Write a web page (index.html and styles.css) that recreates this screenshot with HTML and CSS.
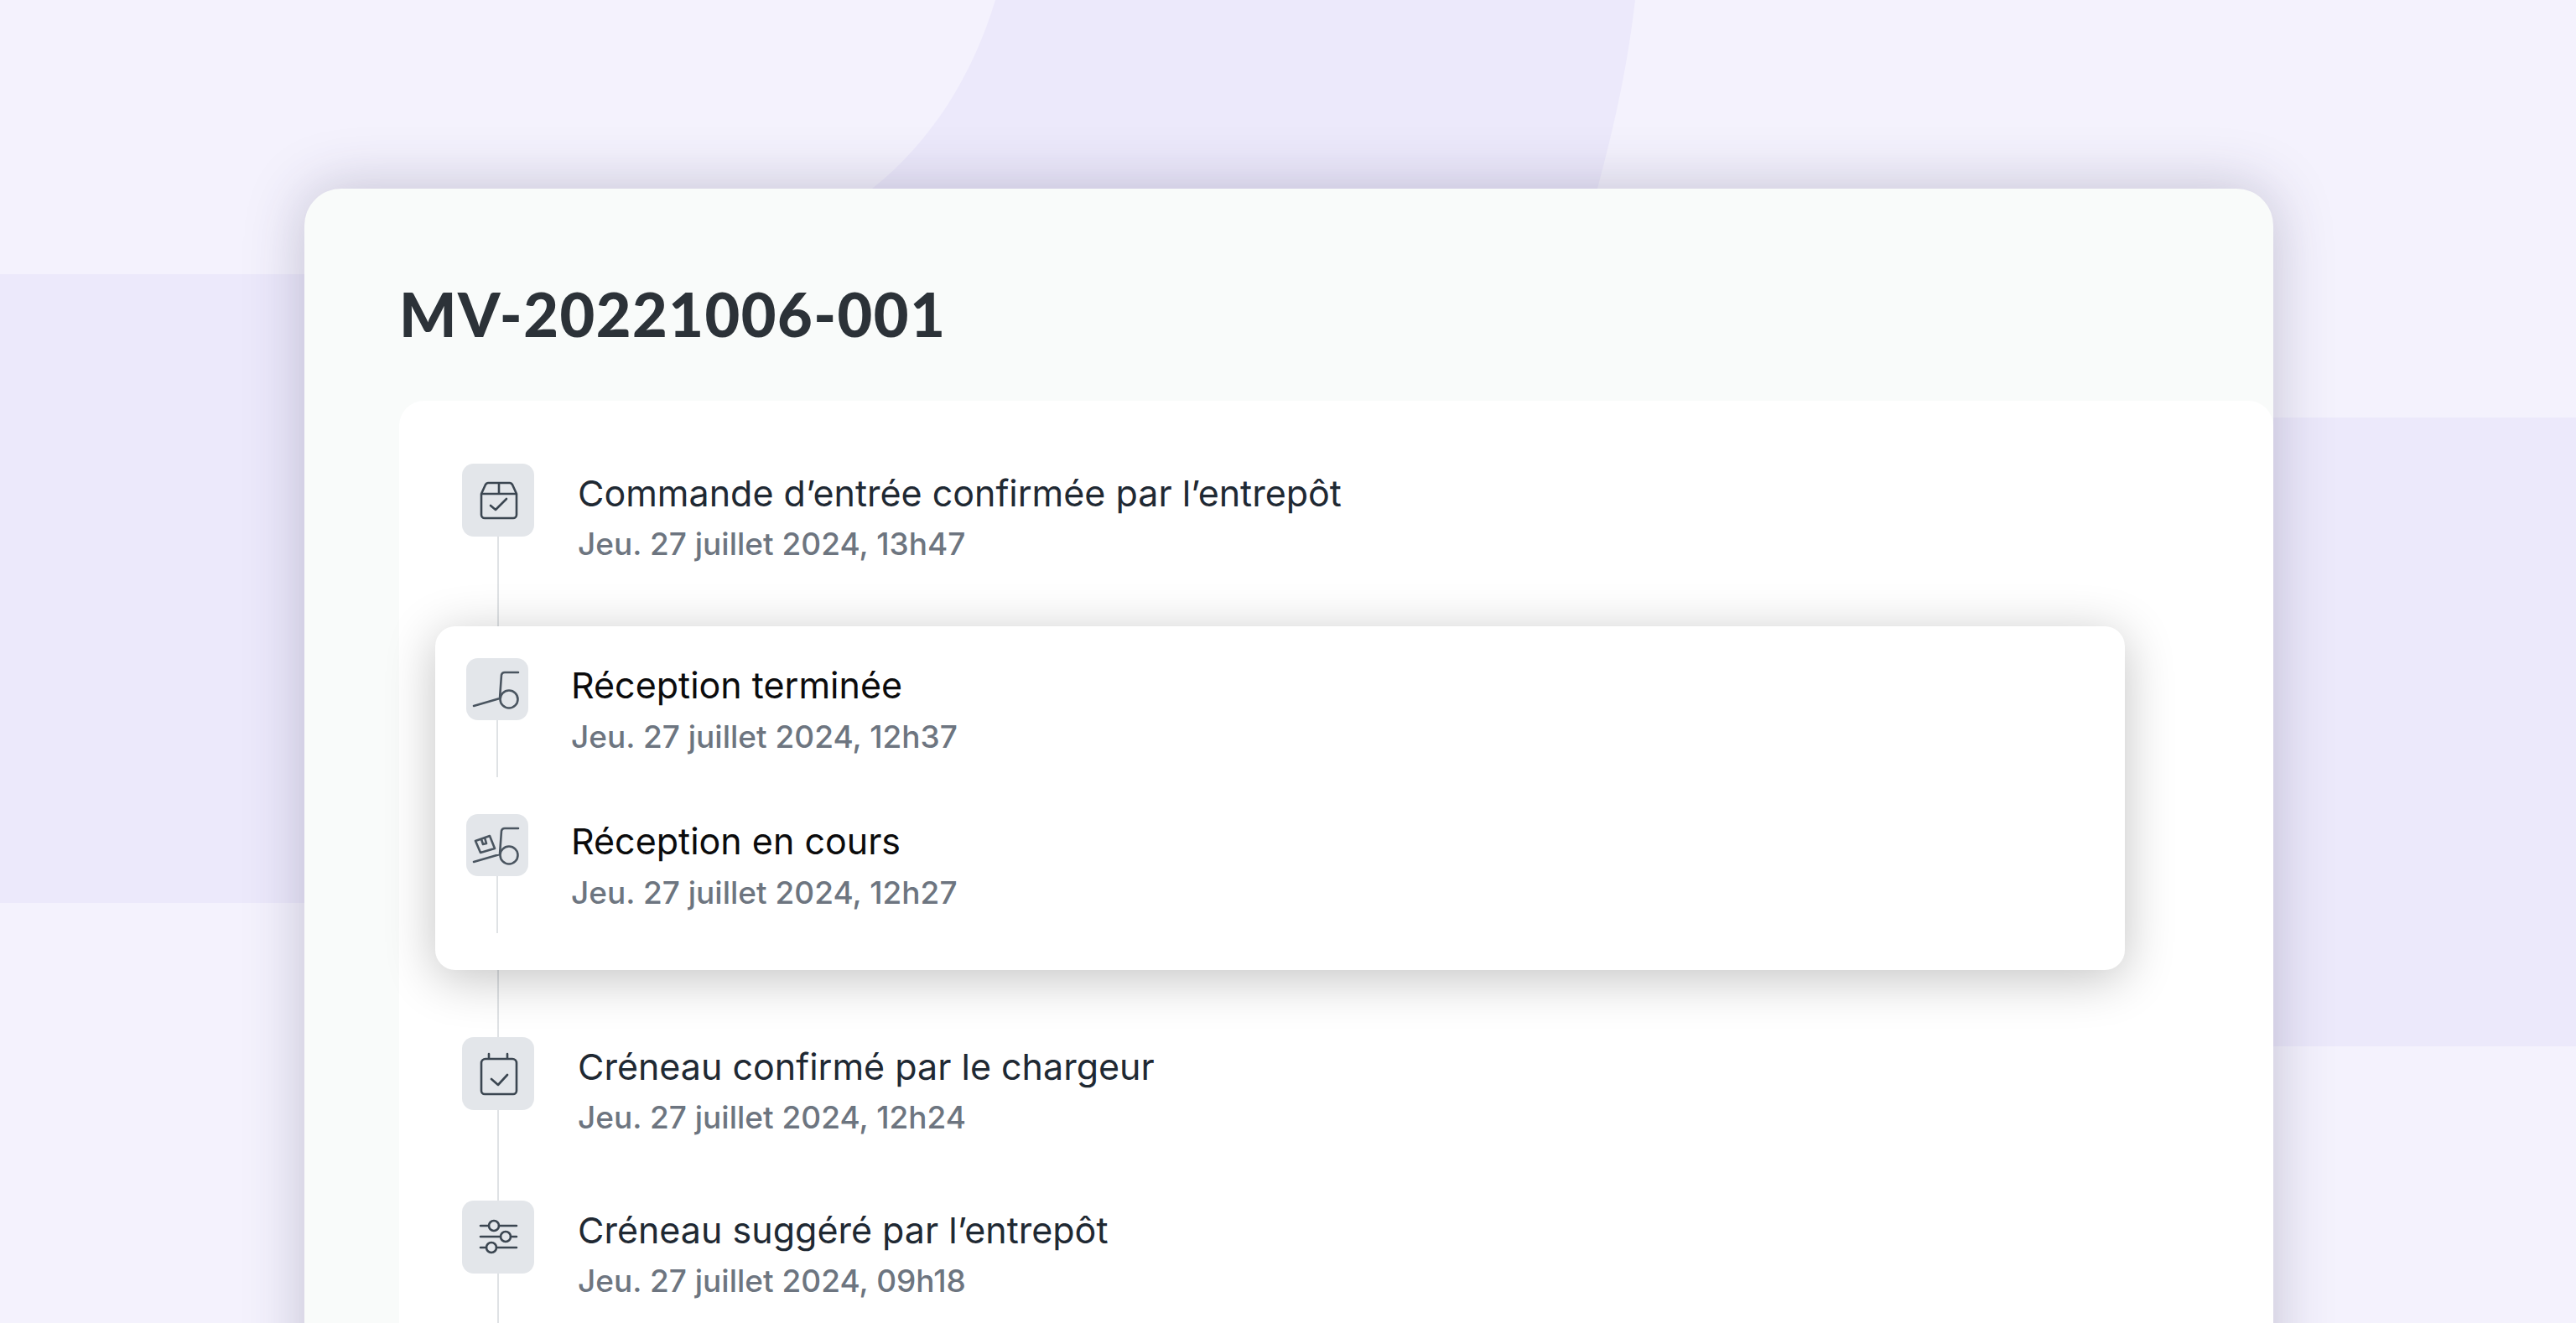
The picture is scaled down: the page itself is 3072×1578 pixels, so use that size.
FILE: index.html
```html
<!DOCTYPE html>
<html lang="fr">
<head>
<meta charset="utf-8">
<title>MV-20221006-001</title>
<link rel="stylesheet" href="styles.css">
</head>
<body>
<svg class="backdrop" viewBox="0 0 3072 1578" aria-hidden="true">
  <rect class="shade" x="0" y="327" width="400" height="750"/>
  <rect class="shade" x="2680" y="498" width="392" height="750"/>
  <path class="shade" d="M1187 0 C1160 90 1110 170 1040 225 L1040 300 L1890 300 L1905 225 C1928 140 1942 70 1950 0 Z"/>
</svg>
<main class="card">
  <h1 class="ref">MV-20221006-001</h1>
  <section class="panel">
    <div class="timeline">
      <article class="step step-tall">
        <div class="rail">
          <div class="badge">
            <svg class="ico" viewBox="0 0 86 86"><path d="M23 36v25a4 4 0 0 0 4 4h34a4 4 0 0 0 4-4V36l-5-11a4 4 0 0 0-3-2H31a4 4 0 0 0-3 2zM23 36h42M44 23v13M34 50l6 5 13-13"/></svg>
          </div>
          <div class="wire"></div>
        </div>
        <div class="copy">
          <p class="what">Commande d’entrée confirmée par l’entrepôt</p>
          <p class="when">Jeu. 27 juillet 2024, 13h47</p>
        </div>
      </article>
      <article class="step">
        <div class="rail">
          <div class="badge">
            <svg class="ico" viewBox="0 0 86 86"><path d="M23 31a5 5 0 0 1 5-5h32a5 5 0 0 1 5 5v33a4 4 0 0 1-4 4H27a4 4 0 0 1-4-4zM32 20v6M54 20v6M35 50l8 7 11-12"/></svg>
          </div>
          <div class="wire"></div>
        </div>
        <div class="copy">
          <p class="what">Créneau confirmé par le chargeur</p>
          <p class="when">Jeu. 27 juillet 2024, 12h24</p>
        </div>
      </article>
      <article class="step">
        <div class="rail">
          <div class="badge">
            <svg class="ico" viewBox="0 0 86 86"><path d="M22 30h10M44 30h21M22 43h24M58 43h7M22 56h7M41 56h24"/><circle cx="38" cy="30" r="6"/><circle cx="52" cy="43" r="6"/><circle cx="35" cy="56" r="6"/></svg>
          </div>
          <div class="wire"></div>
        </div>
        <div class="copy">
          <p class="what">Créneau suggéré par l’entrepôt</p>
          <p class="when">Jeu. 27 juillet 2024, 09h18</p>
        </div>
      </article>
    </div>
    <aside class="popout">
      <article class="pop-step">
        <div class="rail rail-small">
          <div class="badge badge-small">
            <svg class="ico-small" viewBox="0 0 74 74"><path d="M62 17H46a4 4 0 0 0-4 3l-2 28L9 57"/><circle cx="51" cy="49" r="10.5"/></svg>
          </div>
          <div class="wire"></div>
        </div>
        <div class="copy copy-small">
          <p class="what what-strong">Réception terminée</p>
          <p class="when">Jeu. 27 juillet 2024, 12h37</p>
        </div>
      </article>
      <article class="pop-step">
        <div class="rail rail-small">
          <div class="badge badge-small">
            <svg class="ico-small" viewBox="0 0 74 74"><path d="M62 17H46a4 4 0 0 0-4 3l-2 28L9 57"/><circle cx="51" cy="49" r="10.5"/><path d="M11 32l17-6 6 15-17 5zM18 30l2 6 4-1-2-7"/></svg>
          </div>
          <div class="wire"></div>
        </div>
        <div class="copy copy-small">
          <p class="what what-strong">Réception en cours</p>
          <p class="when">Jeu. 27 juillet 2024, 12h27</p>
        </div>
      </article>
    </aside>
  </section>
</main>
</body>
</html>
```
FILE: styles.css
```css
* { box-sizing: border-box; }
html, body { margin: 0; height: 1578px; overflow: hidden; }
body {
  background: #f4f2fd;
  font-family: "Inter", "Liberation Sans", sans-serif;
  padding: 225px 361px 0 363px;
}
p { margin: 0; }
.backdrop { position: absolute; inset: 0; width: 3072px; height: 1578px; }
.shade { fill: #ece9fb; }
.card {
  position: relative;
  height: 1500px;
  background: #f9fbfa;
  border-radius: 44px;
  box-shadow: 0 0 70px rgba(50, 45, 85, .26);
  padding: 106px 0 0 113px;
}
.ref {
  margin: 0;
  height: 147px;
  font-family: "Lato", "Liberation Sans", sans-serif;
  font-size: 72px;
  font-weight: 900;
  line-height: 87px;
  letter-spacing: 1.5px;
  color: #2c3238;
}
.panel {
  position: relative;
  height: 1200px;
  background: #fff;
  border-radius: 30px;
  padding: 75px 0 0 75px;
}
.timeline { display: flex; flex-direction: column; }
.step { display: flex; gap: 52px; height: 195px; }
.step-tall { height: 684px; }
.rail { width: 86px; display: flex; flex-direction: column; align-items: center; }
.rail-small { width: 74px; }
.badge {
  flex: none;
  width: 86px;
  height: 87px;
  border-radius: 14px;
  background: #e3e6ea;
  display: flex;
}
.badge-small { width: 74px; height: 74px; }
.wire { flex: 1; width: 2px; background: #dfe2e5; }
.ico, .ico-small {
  fill: none;
  stroke: #3b4651;
  stroke-width: 2.6;
  stroke-linecap: round;
  stroke-linejoin: round;
}
.ico { width: 86px; height: 86px; }
.ico-small { width: 74px; height: 74px; stroke: #4a5560; }
.copy { padding-top: 12px; }
.copy-small { padding-top: 9px; }
.what {
  font-size: 43px;
  line-height: 46px;
  color: #1f2933;
}
.what-strong { color: #0b0b0c; height: 50px; }
.when {
  margin-top: 15px;
  font-size: 37px;
  line-height: 46px;
  font-weight: 500;
  color: #6d7580;
}
.popout {
  position: absolute;
  left: 43px;
  top: 269px;
  width: 2015px;
  height: 410px;
  background: #fff;
  border-radius: 24px;
  box-shadow: 0 10px 60px rgba(0, 0, 0, .24);
  padding: 38px 37px 0;
  display: flex;
  flex-direction: column;
}
.pop-step { display: flex; gap: 51px; height: 192px; }
.pop-step .rail { height: 142px; }
.copy-small .when { margin-top: 12px; }
```
